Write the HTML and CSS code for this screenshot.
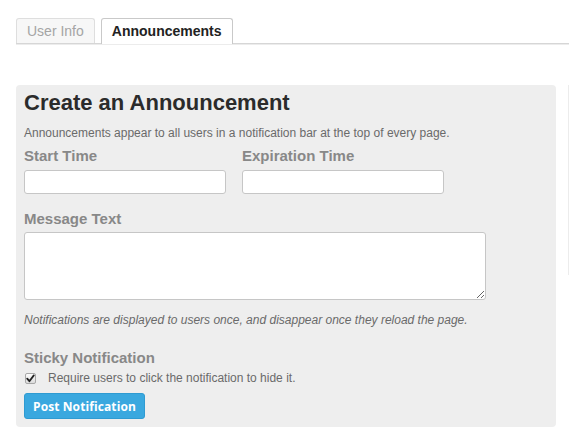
FILE: index.html
```html
<!DOCTYPE html>
<html>
<head>
<meta charset="utf-8">
<link rel="stylesheet" href="styles.css">
</head>
<body>
<div class="page">
  <div class="tabs">
    <div class="tab">User Info</div>
    <div class="tab active">Announcements</div>
  </div>
  <div class="content">
    <div class="panel">
      <h2 class="title">Create an Announcement</h2>
      <p class="desc">Announcements appear to all users in a notification bar at the top of every page.</p>
      <div class="row">
        <div class="field">
          <label class="label">Start Time</label>
          <input class="input" type="text">
        </div>
        <div class="field">
          <label class="label">Expiration Time</label>
          <input class="input" type="text">
        </div>
      </div>
      <label class="label msg-label">Message Text</label>
      <textarea class="textarea"></textarea>
      <p class="note">Notifications are displayed to users once, and disappear once they reload the page.</p>
      <label class="label sticky-label">Sticky Notification</label>
      <div class="check-row">
        <span class="check"><svg width="9" height="9" viewBox="0 0 9 9"><path d="M1.2 4.6 L3.4 7.2 L7.8 1.4" fill="none" stroke="#222" stroke-width="1.8" stroke-linecap="round" stroke-linejoin="round"/></svg></span>
        <span class="check-text">Require users to click the notification to hide it.</span>
      </div>
      <button class="btn">Post Notification</button>
    </div>
    <div class="side"></div>
  </div>
</div>
</body>
</html>
```

FILE: styles.css
```css
html, body {
  margin: 0;
  padding: 0;
  background: #ffffff;
  font-family: "Liberation Sans", Arial, sans-serif;
}

.page {
  padding: 18px 0 0 16px;
}

.tabs {
  display: flex;
  gap: 6px;
  border-bottom: 1px solid #d6d6d6;
  box-shadow: 0 1px 0 #ececec;
  height: 25px;
}

.tab {
  box-sizing: border-box;
  height: 25px;
  padding: 0 10px;
  line-height: 24px;
  font-size: 14px;
  color: #a5a5a5;
  background: #f7f7f7;
  border: 1px solid #dedede;
  border-bottom: none;
  border-radius: 3px 3px 0 0;
}

.tab.active {
  color: #222;
  font-weight: bold;
  background: #fff;
  border-color: #c9c9c9;
  height: 26px;
}

.content {
  display: flex;
  align-items: flex-start;
  gap: 12px;
  margin-top: 41px;
}

.panel {
  box-sizing: border-box;
  width: 540px;
  background: #eeeeee;
  border-radius: 4px;
  padding: 5px 8px 8px;
}

.side {
  width: 1px;
  height: 190px;
  background: #ececec;
  flex: none;
}

.title {
  margin: 0;
  font-size: 22px;
  line-height: 26px;
  font-weight: bold;
  color: #2b2b2b;
}

.desc {
  margin: 10px 0 0;
  font-size: 12px;
  line-height: 15px;
  color: #6a6a6a;
}

.row {
  display: flex;
  gap: 16px;
}

.field {
  display: flex;
  flex-direction: column;
}

.label {
  display: block;
  font-size: 15px;
  line-height: 18px;
  font-weight: bold;
  color: #888888;
}

.row .label {
  margin-top: 6px;
  margin-bottom: 5px;
}

.input {
  box-sizing: border-box;
  width: 202px;
  height: 24px;
  margin: 0;
  background: #fff;
  border: 1px solid #c6c6c6;
  border-radius: 3px;
}

.msg-label {
  margin-top: 16px;
  margin-bottom: 4px;
}

.textarea {
  display: block;
  box-sizing: border-box;
  width: 462px;
  height: 68px;
  margin: 0;
  background: #fff;
  border: 1px solid #c6c6c6;
  border-radius: 3px;
  resize: both;
}

.note {
  margin: 13px 0 0;
  font-size: 12px;
  line-height: 15px;
  font-style: italic;
  color: #6a6a6a;
}

.sticky-label {
  margin-top: 21px;
}

.check-row {
  display: flex;
  align-items: center;
  height: 18px;
  margin-top: 2px;
}

.check {
  box-sizing: border-box;
  width: 11px;
  height: 11px;
  margin: 0 12px 0 1px;
  border: 1px solid #a8a8a8;
  border-radius: 2px;
  background: linear-gradient(#fdfdfd, #dcdcdc);
  display: flex;
  align-items: center;
  justify-content: center;
}

.check svg {
  display: block;
}

.check-text {
  font-size: 12px;
  color: #6a6a6a;
}

.btn {
  margin-top: 6px;
  display: block;
  height: 26px;
  padding: 0 8px;
  border: 1px solid #2f9bd2;
  border-radius: 3px;
  background: #3aa8df;
  color: #ffffff;
  font-family: "Open Sans", sans-serif;
  font-weight: bold;
  font-size: 12px;
  letter-spacing: 0.1px;
}
```
